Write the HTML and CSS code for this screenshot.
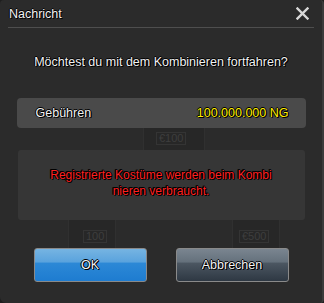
FILE: index.html
```html
<!DOCTYPE html>
<html lang="de">
<head>
<meta charset="utf-8">
<link rel="stylesheet" href="styles.css">
</head>
<body>
<div class="dialog">
  <div class="backdrop" aria-hidden="true">
    <div class="ghost-col col-mid"><span class="ghost-tag">€100</span></div>
    <div class="ghost-col col-left"><span class="ghost-tag">100</span></div>
    <div class="ghost-col col-right"><span class="ghost-tag">€500</span></div>
  </div>
  <div class="titlebar">
    <span class="title">Nachricht</span>
    <svg class="close" width="13" height="13" viewBox="0 0 13 13"><path d="M1.5 1.5 L11.5 11.5 M11.5 1.5 L1.5 11.5" stroke="#d8d8d8" stroke-width="2.4" stroke-linecap="square"/></svg>
  </div>
  <div class="content">
    <p class="question">Möchtest du mit dem Kombinieren fortfahren?</p>
    <div class="fee">
      <span class="fee-label">Gebühren</span>
      <span class="fee-amount">100.000.000 NG</span>
    </div>
    <div class="notice">Registrierte Kostüme werden beim Kombi<br>nieren verbraucht.</div>
    <div class="actions">
      <button class="btn btn-ok">OK</button>
      <button class="btn btn-cancel">Abbrechen</button>
    </div>
  </div>
</div>
</body>
</html>
```
FILE: styles.css
```css
html, body {
  margin: 0;
  padding: 0;
  background: #1e1e1e;
}
.dialog {
  position: relative;
  width: 324px;
  height: 303px;
  box-sizing: border-box;
  background: #2b2b2b;
  border-right: 2px solid #3b3b3b;
  border-radius: 4px 4px 4px 6px;
  overflow: hidden;
  font-family: "Liberation Sans", Arial, sans-serif;
  font-size: 12px;
  color: #f2f2f2;
}
.backdrop {
  position: absolute;
  inset: 0;
  pointer-events: none;
}
.ghost-col {
  position: absolute;
  border-left: 1px solid #303030;
  border-right: 1px solid #303030;
  background: #272727;
}
.col-mid { left: 143px; top: 128px; width: 60px; height: 22px; }
.col-left { left: 68px; top: 220px; width: 46px; height: 28px; }
.col-right { left: 232px; top: 220px; width: 46px; height: 28px; }
.ghost-tag {
  display: inline-block;
  margin: 4px 0 0 12px;
  padding: 0 2px;
  border: 1px solid #343434;
  color: #3e3e3e;
  font-size: 11px;
  line-height: 11px;
}
.col-left .ghost-tag { margin-top: 10px; margin-left: 14px; }
.col-right .ghost-tag { margin-top: 10px; margin-left: 6px; }
.titlebar {
  position: relative;
  height: 27px;
  margin: 0 8px 0 8px;
  border-bottom: 1px solid #4e4e4e;
  display: flex;
  align-items: center;
  justify-content: space-between;
}
.titlebar::before {
  content: "";
  position: absolute;
  left: -8px;
  right: -8px;
  top: 0;
  bottom: 0;
  background: linear-gradient(#363636, #2e2e2e);
  z-index: -1;
}
.title {
  font-size: 12.5px;
  padding-left: 1px;
  text-shadow: 1px 1px 0 #000, -1px 0 0 #000, 0 -1px 0 #000;
}
.close {
  margin-right: 5px;
}
.content {
  position: relative;
  display: flex;
  flex-direction: column;
  align-items: center;
}
.question {
  margin: 27px 0 0 0;
  height: 15px;
  line-height: 15px;
  font-size: 12.5px;
  text-shadow: 1px 1px 0 #000, -1px 0 0 #000, 0 -1px 0 #000, 1px 0 0 #000;
}
.fee {
  margin-top: 28px;
  width: 289px;
  height: 30px;
  box-sizing: border-box;
  background: #4a4a4a;
  border-radius: 4px;
  display: flex;
  align-items: center;
  justify-content: space-between;
  padding: 0 17px 0 19px;
  font-size: 12.5px;
  text-shadow: 1px 1px 0 #000, -1px 0 0 #000, 0 -1px 0 #000, 1px 0 0 #000;
}
.fee-amount {
  color: #ffee00;
}
.notice {
  margin-top: 22px;
  width: 287px;
  height: 70px;
  box-sizing: border-box;
  background: #363636;
  border-radius: 3px;
  display: flex;
  align-items: center;
  justify-content: center;
  text-align: center;
  color: #ff2020;
  font-size: 12px;
  line-height: 16px;
  padding-bottom: 4px;
  text-shadow: 1px 1px 0 #000, -1px 0 0 #000, 0 -1px 0 #000, 1px 0 0 #000, -1px -1px 0 #000;
}
.actions {
  margin-top: 28px;
  display: flex;
  gap: 29px;
}
.btn {
  width: 113px;
  height: 34px;
  box-sizing: border-box;
  border-radius: 3px;
  border: 1px solid #8a8a8a;
  font-family: "Liberation Sans", Arial, sans-serif;
  font-size: 12.5px;
  color: #f4f4f4;
  text-shadow: 1px 1px 0 #000, -1px 0 0 #000, 0 -1px 0 #000, 1px 0 0 #000;
  padding: 0;
}
.btn-ok {
  background: linear-gradient(#76b4e2 0%, #5aa3dd 40%, #2c88d6 45%, #1e7cd0 100%);
}
.btn-cancel {
  background: linear-gradient(#7a8590 0%, #65717c 40%, #4b5661 45%, #2e3843 100%);
}
```
